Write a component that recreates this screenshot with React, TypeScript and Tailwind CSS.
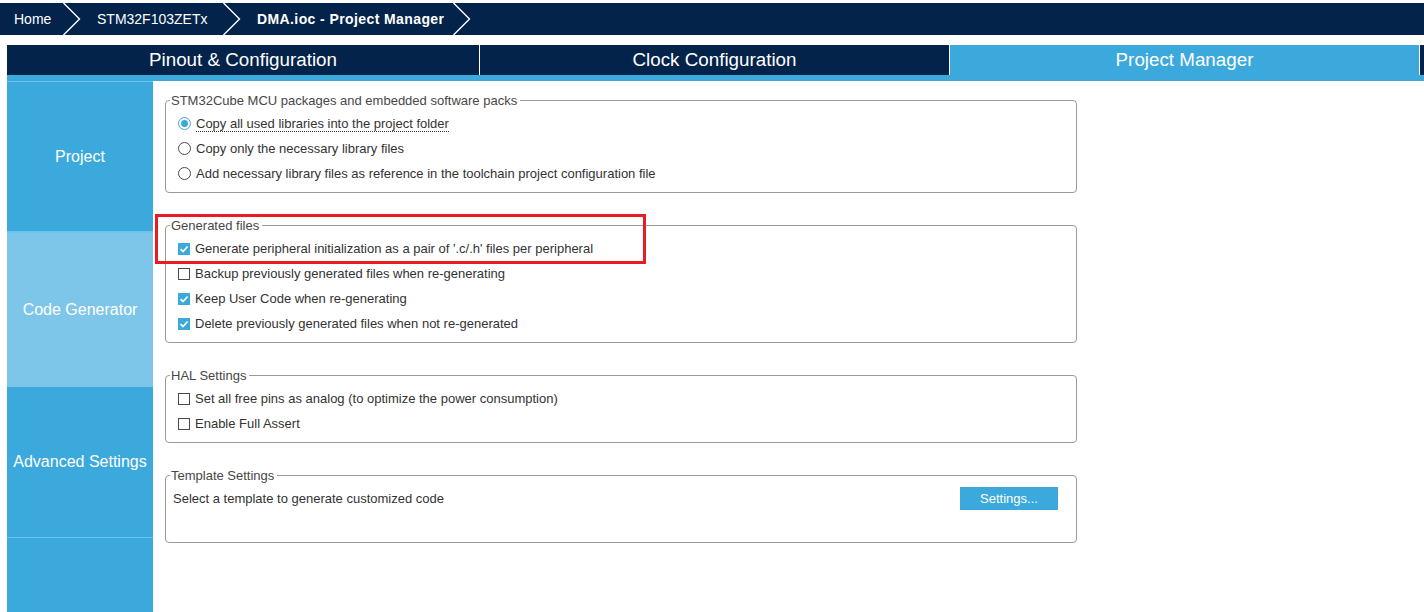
import React from "react";

const BLUE = "bg-[#3ba9dc]";

function Chevron() {
  return (
    <svg width="19" height="32" viewBox="0 0 19 32" className="shrink-0">
      <polyline points="0.5,0 16.5,16 0.5,32" fill="none" stroke="white" strokeWidth="1.4" />
    </svg>
  );
}

function Check({ checked }: { checked: boolean }) {
  if (checked) {
    return (
      <span className="w-[12px] h-[12px] bg-[#3ba9dc] flex items-center justify-center shrink-0">
        <svg width="10" height="10" viewBox="0 0 10 10">
          <path d="M1.6 5.1 L4 7.5 L8.6 2.5" stroke="white" strokeWidth="1.7" fill="none" />
        </svg>
      </span>
    );
  }
  return <span className="w-[12px] h-[12px] border border-[#4a4a4a] bg-white shrink-0" />;
}

function Radio({ checked }: { checked: boolean }) {
  if (checked) {
    return (
      <span className="w-[13px] h-[13px] rounded-full border border-[#3ba9dc] bg-white flex items-center justify-center shrink-0">
        <span className="w-[7px] h-[7px] rounded-full bg-[#3ba9dc]" />
      </span>
    );
  }
  return <span className="w-[13px] h-[13px] rounded-full border border-[#4a4a4a] bg-white shrink-0" />;
}

function Group({ title, children, className = "" }: { title: string; children: React.ReactNode; className?: string }) {
  return (
    <fieldset className={"w-[912px] min-w-0 border border-[#9a9a9a] rounded-[4px] pt-[2px] pb-[6px] " + className}>
      <legend className="ml-[4px] pl-[1px] pr-[3px] pt-[2px] text-[13px] leading-[16px] text-[#474747]">{title}</legend>
      {children}
    </fieldset>
  );
}

function Row({ children }: { children: React.ReactNode }) {
  return <div className="h-[25px] flex items-center pl-[12px] gap-[5px] text-[13px] text-[#333]">{children}</div>;
}

export default function App() {
  return (
    <div className="relative w-[1424px] h-[612px] bg-white overflow-hidden font-['Liberation_Sans',Arial,sans-serif]">
      {/* breadcrumb */}
      <div className="mt-[3px] h-[32px] bg-[#03234b] flex items-center text-white text-[14px]">
        <span className="w-[63px] pl-[14px]">Home</span>
        <Chevron />
        <span className="w-[141px] pl-[15px]">STM32F103ZETx</span>
        <Chevron />
        <span className="w-[211px] pl-[15px] font-bold tracking-[0.4px]">DMA.ioc - Project Manager</span>
        <Chevron />
      </div>

      <div className="mt-[10px] ml-[7px] flex flex-col">
        {/* tabs */}
        <div className="h-[30px] flex text-white text-[18.8px]">
          <div className="w-[472px] bg-[#03234b] flex items-center justify-center">Pinout &amp; Configuration</div>
          <div className="w-[1px] bg-white" />
          <div className="w-[469px] bg-[#03234b] flex items-center justify-center">Clock Configuration</div>
          <div className="w-[1px] bg-white" />
          <div className={"w-[469px] flex items-center justify-center " + BLUE}>Project Manager</div>
          <div className="w-[1px] bg-white" />
          <div className="flex-1 bg-[#03234b]" />
        </div>
        <div className={"h-[6px] " + BLUE} />

        <div className="flex h-[531px]">
          {/* sidebar */}
          <div className="w-[146px] flex flex-col text-white text-[16px]">
            <div className="h-[1px] bg-[#6cc3ec]" />
            <div className={"h-[149px] flex items-center justify-center " + BLUE}>Project</div>
            <div className="h-[2px] bg-[#6cc3ec]" />
            <div className="h-[154px] bg-[#7ec6e9] flex items-center justify-center">Code Generator</div>
            <div className={"h-[150px] flex items-center justify-center " + BLUE}>Advanced Settings</div>
            <div className="h-[1px] bg-[#6cc3ec]" />
            <div className={"flex-1 " + BLUE} />
          </div>

          {/* content */}
          <div className="flex-1 pl-[12px] pt-[10px] flex flex-col gap-[23px]">
            <Group title="STM32Cube MCU packages and embedded software packs">
              <Row>
                <Radio checked />
                <span className="border-b border-dotted border-[#333] leading-[15px]">Copy all used libraries into the project folder</span>
              </Row>
              <Row>
                <Radio checked={false} />
                <span>Copy only the necessary library files</span>
              </Row>
              <Row>
                <Radio checked={false} />
                <span>Add necessary library files as reference in the toolchain project configuration file</span>
              </Row>
            </Group>

            <Group title="Generated files">
              <Row>
                <Check checked />
                <span>Generate peripheral initialization as a pair of '.c/.h' files per peripheral</span>
              </Row>
              <Row>
                <Check checked={false} />
                <span>Backup previously generated files when re-generating</span>
              </Row>
              <Row>
                <Check checked />
                <span>Keep User Code when re-generating</span>
              </Row>
              <Row>
                <Check checked />
                <span>Delete previously generated files when not re-generated</span>
              </Row>
            </Group>

            <Group title="HAL Settings">
              <Row>
                <Check checked={false} />
                <span>Set all free pins as analog (to optimize the power consumption)</span>
              </Row>
              <Row>
                <Check checked={false} />
                <span>Enable Full Assert</span>
              </Row>
            </Group>

            <Group title="Template Settings">
              <div className="h-[25px] flex items-center pl-[7px] pr-[18px] text-[13px] text-[#333]">
                <span className="flex-1">Select a template to generate customized code</span>
                <div className="w-[98px] h-[23px] bg-[#3ba9dc] text-white flex items-center justify-center">Settings...</div>
              </div>
              <div className="h-[25px]" />
            </Group>
          </div>
        </div>
      </div>

      {/* red annotation box */}
      <div className="absolute left-[155px] top-[214px] w-[491px] h-[50px] border-[3px] border-[#e91c24]" />
    </div>
  );
}
